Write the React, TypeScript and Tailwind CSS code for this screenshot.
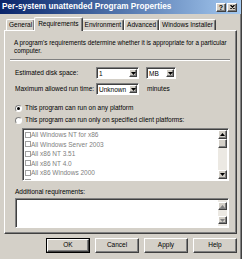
import React from 'react';

const raised =
  'border border-t-white border-l-white border-r-[#404040] border-b-[#404040] shadow-[inset_-1px_-1px_#808080] bg-[#d4d0c8]';
const sunken =
  'border border-t-[#808080] border-l-[#808080] border-r-white border-b-white shadow-[inset_1px_1px_#404040]';

const Arrow = ({ dir, color = '#000' }: { dir: 'up' | 'down'; color?: string }) => (
  <svg width="5" height="3" viewBox="0 0 5 3" className="block">
    {dir === 'down' ? (
      <polygon points="0,0 5,0 2.5,3" fill={color} />
    ) : (
      <polygon points="0,3 5,3 2.5,0" fill={color} />
    )}
  </svg>
);

const DropBtn = () => (
  <div className={`${raised} w-[8px] my-[1px] mr-[1px] flex items-center justify-center`}>
    <Arrow dir="down" />
  </div>
);

const Combo = ({ value, width }: { value: string; width: string }) => (
  <div className={`${sunken} ${width} h-[12px] bg-white flex items-stretch`}>
    <span className="flex-1 pl-[2px] leading-[10px] pt-[1px]">{value}</span>
    <DropBtn />
  </div>
);

const Radio = ({ checked, label }: { checked?: boolean; label: string }) => (
  <div className="flex items-center h-[8px] ml-[10px]">
    <div className="w-[7px] h-[7px] rounded-full bg-white border border-t-[#808080] border-l-[#808080] border-r-white border-b-white flex items-center justify-center">
      {checked && <div className="w-[3px] h-[3px] rounded-full bg-black" />}
    </div>
    <span className="ml-[3px] leading-[8px]">{label}</span>
  </div>
);

const PLATFORMS = [
  'All Windows NT for x86',
  'All Windows Server 2003',
  'All x86 NT 3.51',
  'All x86 NT 4.0',
  'All x86 Windows 2000',
  'All x86 Windows XP',
];

const TABS = ['General', 'Requirements', 'Environment', 'Advanced', 'Windows Installer'];

export default function App() {
  return (
    <div className="w-[242px] h-[259px] bg-[#d4d0c8] font-['Liberation_Sans',Arial,sans-serif] text-[6.5px] text-black overflow-hidden border-r border-r-[#404040] shadow-[inset_-1px_0_#808080] flex flex-col select-none">
      {/* Title bar */}
      <div className="h-[14px] shrink-0 bg-linear-to-r from-[#0a246a] to-[#a6caf0] flex items-center pl-[2px] pr-[4px]">
        <span className="flex-1 text-white font-bold text-[8.2px] leading-[14px] whitespace-nowrap">
          Per-system unattended Program Properties
        </span>
        <div className={`${raised} w-[10px] h-[9px] flex items-center justify-center text-[7px] font-bold leading-none`}>?</div>
        <div className={`${raised} w-[10px] h-[9px] ml-[1px] flex items-center justify-center`}>
          <svg width="5" height="4" viewBox="0 0 5 4">
            <path d="M0.5 0 L4.5 4 M4.5 0 L0.5 4" stroke="#000" strokeWidth="1.2" />
          </svg>
        </div>
      </div>

      {/* Tabs */}
      <div className="mt-[3px] h-[13px] shrink-0 flex items-end pl-[6px]">
        {TABS.map((t) => {
          const active = t === 'Requirements';
          return (
            <div
              key={t}
              className={
                active
                  ? 'relative z-10 h-[14px] -mb-px -mx-[1px] px-[3px] bg-[#d4d0c8] border-t border-l border-t-white border-l-white border-r border-r-[#404040] shadow-[inset_-1px_0_#808080] rounded-t-[2px] leading-[12px] whitespace-nowrap'
                  : 'h-[11px] px-[2px] border-t border-l border-t-white border-l-white border-r border-r-[#404040] shadow-[inset_-1px_0_#808080] rounded-t-[2px] leading-[10px] whitespace-nowrap'
              }
            >
              {t}
            </div>
          );
        })}
      </div>

      {/* Panel */}
      <div className="ml-[4px] w-[233px] h-[204px] shrink-0 border border-t-white border-l-white border-r-[#404040] border-b-[#404040] shadow-[inset_-1px_-1px_#808080] flex flex-col">
        <p className="mt-[8px] ml-[9px] w-[222px] leading-[8px] text-[6.3px]">
          A program's requirements determine whether it is appropriate for a particular computer.
        </p>

        <div className="mt-[4px] ml-[5px] w-[220px] border-t border-t-[#808080] border-b border-b-white" />

        <div className="mt-[6px] ml-[10px] flex items-center h-[12px]">
          <span className="w-[81px]">Estimated disk space:</span>
          <Combo value="1" width="w-[43px]" />
          <div className="ml-[7px]">
            <Combo value="MB" width="w-[30px]" />
          </div>
        </div>

        <div className="mt-[4px] ml-[10px] flex items-center h-[12px]">
          <span className="w-[81px]">Maximum allowed run time:</span>
          <Combo value="Unknown" width="w-[43px]" />
          <span className="ml-[8px]">minutes</span>
        </div>

        <div className="mt-[9px]">
          <Radio checked label="This program can run on any platform" />
        </div>
        <div className="mt-[4px]">
          <Radio label="This program can run only on specified client platforms:" />
        </div>

        {/* Platform list */}
        <div className={`${sunken} mt-[4px] ml-[17px] w-[207px] h-[53px] bg-white flex overflow-hidden`}>
          <div className="flex-1 pt-[1px] pl-[2px] overflow-hidden text-[#808080]">
            {PLATFORMS.map((p) => (
              <div key={p} className="h-[9.5px] flex items-center whitespace-nowrap">
                <div className="w-[6px] h-[6px] border border-[#a0a0a0] bg-white" />
                <span className="leading-[9px]">{p}</span>
              </div>
            ))}
          </div>
          <div className="w-[9px] my-[1px] mr-[1px] bg-[#ece9e3] flex flex-col">
            <div className={`${raised} h-[9px] flex items-center justify-center`}>
              <Arrow dir="up" />
            </div>
            <div className={`${raised} h-[9px]`} />
            <div className="flex-1" />
            <div className={`${raised} h-[9px] flex items-center justify-center`}>
              <Arrow dir="down" />
            </div>
          </div>
        </div>

        <div className="mt-[7px] ml-[10px] h-[8px] leading-[8px]">Additional requirements:</div>

        <div className={`${sunken} mt-[2px] ml-[10px] w-[214px] h-[30px] bg-white flex`}>
          <div className="flex-1" />
          <div className="w-[9px] my-[1px] mr-[1px] bg-[#ece9e3] flex flex-col justify-between py-[2px]">
            <div className={`${raised} h-[8px] flex items-center justify-center`}>
              <Arrow dir="up" color="#808080" />
            </div>
            <div className={`${raised} h-[8px] flex items-center justify-center`}>
              <Arrow dir="down" color="#808080" />
            </div>
          </div>
        </div>
      </div>

      {/* Buttons */}
      <div className="mt-[4px] ml-[46px] flex gap-[5px]">
        <div className="w-[44px] h-[15px] border border-black">
          <div className={`${raised} w-full h-full flex items-center justify-center leading-none`}>OK</div>
        </div>
        {['Cancel', 'Apply', 'Help'].map((b) => (
          <div key={b} className={`${raised} w-[44px] h-[15px] flex items-center justify-center leading-none`}>
            {b}
          </div>
        ))}
      </div>
    </div>
  );
}
